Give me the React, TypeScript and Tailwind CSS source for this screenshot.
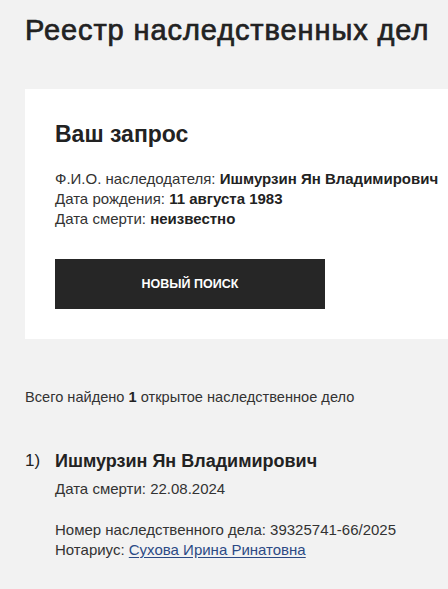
export default function App() {
  return (
    <div className="min-h-[589px] w-[448px] overflow-hidden bg-[#f2f2f2] text-[#222222]" style={{ fontFamily: '"Liberation Sans", Arial, sans-serif' }}>
      <div className="pl-[25px] pt-[14px]">
        <h1 className="text-[29px] leading-[32px] font-normal tracking-[0.9px] whitespace-nowrap [-webkit-text-stroke:0.7px_#222222]">Реестр наследственных дел</h1>
      </div>
      <div className="ml-[25px] mt-[43px] w-[440px] bg-white pl-[30px] pt-[32px] pb-[30px]">
        <h2 className="text-[23px] leading-[27px] font-bold text-[#222222]">Ваш запрос</h2>
        <div className="mt-[21px] text-[15px] leading-[20px] text-[#333333] whitespace-nowrap">
          <div>Ф.И.О. наследодателя: <b className="text-[#222222]">Ишмурзин Ян Владимирович</b></div>
          <div>Дата рождения: <b className="text-[#222222]">11 августа 1983</b></div>
          <div>Дата смерти: <b className="text-[#222222]">неизвестно</b></div>
        </div>
        <button className="mt-[30px] flex h-[50px] w-[270px] items-center justify-center bg-[#262626] text-[12.5px] font-bold uppercase text-white">
          Новый поиск
        </button>
      </div>
      <div className="pl-[25px] pt-[49px] text-[14.6px] leading-[18px] text-[#333333] whitespace-nowrap">
        Всего найдено <b className="text-[#222222]">1</b> открытое наследственное дело
      </div>
      <div className="mt-[42px] flex pl-[25px]">
        <div className="w-[30px] text-[17px] leading-[26px] text-[#222222]">1)</div>
        <div className="text-[15px] leading-[20px] text-[#333333] whitespace-nowrap">
          <div className="text-[18px] leading-[26px] font-bold text-[#222222]">Ишмурзин Ян Владимирович</div>
          <div className="mt-[5px]">Дата смерти: 22.08.2024</div>
          <div className="mt-[21px]">Номер наследственного дела: 39325741-66/2025</div>
          <div>
            Нотариус: <a href="#" className="text-[#2c4a85] underline underline-offset-2">Сухова Ирина Ринатовна</a>
          </div>
        </div>
      </div>
    </div>
  );
}
